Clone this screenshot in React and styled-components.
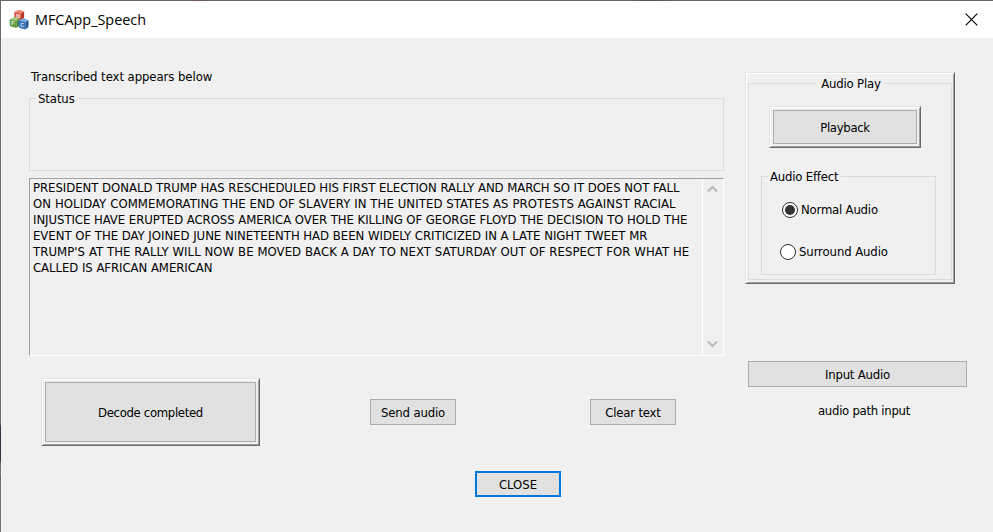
import React from 'react';
import styled, { createGlobalStyle } from 'styled-components';

const GlobalStyle = createGlobalStyle`
  * { box-sizing: border-box; }
  body { margin: 0; background: #f0f0f0; overflow: hidden; }
`;

const Window = styled.div`
  width: 993px;
  height: 532px;
  padding: 1px 0 0 1px;
  background:
    linear-gradient(to right, #686868 0 190px, #71585a 196px 202px, #686868 208px 625px, #55565a 650px, #686868 680px) top / 100% 1px no-repeat,
    linear-gradient(to bottom, #6c6c6c 0 424px, #323642 426px 460px, #747474 464px 477px, #444 478px, #747474 480px) left / 1px 100% no-repeat,
    #f0f0f0;
  font: 13px/16px 'DejaVu Sans Condensed', 'DejaVu Sans', sans-serif;
  color: #000;
`;

const TitleBar = styled.header`
  height: 37px;
  display: flex;
  align-items: center;
  padding: 0 15px 0 8px;
  background: #fff;
`;

const Title = styled.h1`
  flex: 1;
  margin: 0 0 0 6px;
  font: 400 14.4px/20px 'Open Sans', 'Noto Sans', sans-serif;
`;

const CloseIcon = styled.svg`
  display: block;
  width: 13px;
  height: 13px;
`;

const Text = styled.span`
  white-space: nowrap;
  letter-spacing: ${p => p.$track || 0}px;
`;

const Body = styled.main`
  display: flex;
  gap: 21px;
  padding-left: 28px;
`;

const MainColumn = styled.section`
  width: 695px;
  padding-top: 31px;
`;

const Caption = styled.div`
  height: 16px;
  padding-left: 2px;
`;

const Group = styled.fieldset`
  min-width: 0;
  height: ${p => p.$height}px;
  margin: ${p => p.$margin || '0'};
  padding: 0;
  border: 1px solid #dcdcdc;
`;

const Legend = styled.legend`
  height: 15px;
  line-height: 15px;
  margin-left: ${p => (p.$center ? 'auto' : '6px')};
  margin-right: auto;
  padding: 0 3px 0 ${p => (p.$center ? 5 : 2)}px;
`;

const Edit = styled.div`
  display: flex;
  height: 178px;
  margin-top: 7px;
  border: 1px solid #fff;
  border-top-color: #a0a0a0;
  border-left-color: #a0a0a0;
`;

const Transcript = styled.div`
  flex: 1;
  padding: 1px 0 0 3px;
`;

const Line = styled.div`
  height: 16px;
  white-space: nowrap;
  letter-spacing: ${p => p.$track}px;
`;

const ScrollBar = styled.div`
  width: 21px;
  display: flex;
  flex-direction: column;
  justify-content: space-between;
  align-items: center;
  padding: 6px 2px 7px 0;
  border-left: 1px solid #fff;
`;

const Chevron = styled.svg`
  display: block;
  width: 11px;
  height: 8px;
  fill: none;
  stroke: #bcbcbc;
  stroke-width: 2.2;
`;

const Actions = styled.div`
  display: flex;
  align-items: flex-start;
  margin: 22px 0 25px 12px;
`;

const RaisedFrame = styled.div`
  width: ${p => p.$width}px;
  height: ${p => p.$height}px;
  margin: ${p => p.$margin || '0'};
  padding: ${p => p.$pad}px;
  border: 1px solid;
  border-color: #e3e3e3 #696969 #696969 #e3e3e3;
  box-shadow: inset 1px 1px #fff, inset -1px -1px #a0a0a0;
`;

const Button = styled.button`
  display: flex;
  align-items: center;
  justify-content: center;
  width: ${p => (p.$width ? `${p.$width}px` : '100%')};
  height: ${p => (p.$height ? `${p.$height}px` : '100%')};
  margin: ${p => p.$margin || '0'};
  padding: 2px 0 0;
  border: ${p => (p.$default ? '2px solid #0078d7' : '1px solid #adadad')};
  border-radius: 0;
  background: #e1e1e1;
  font: inherit;
  color: #000;
`;

const SideColumn = styled.aside`
  width: 222px;
  padding-top: 34px;
`;

const Radio = styled.label`
  display: flex;
  align-items: center;
  gap: 3px;
  height: 16px;
  line-height: 18px;
  margin: ${p => p.$margin};
`;

const RadioDot = styled.span`
  display: flex;
  align-items: center;
  justify-content: center;
  width: 16px;
  height: 16px;
  border: 1px solid #333;
  border-radius: 50%;
  background: #fff;

  &::after {
    content: '';
    width: 10px;
    height: 10px;
    border-radius: 50%;
    background: ${p => (p.$checked ? '#333' : 'transparent')};
  }
`;

const PathLabel = styled.div`
  display: flex;
  justify-content: center;
  width: 219px;
  margin: 16px 0 0 3px;
  padding: 0 6px 0 19px;
`;

const lines = [
  ['PRESIDENT DONALD TRUMP HAS RESCHEDULED HIS FIRST ELECTION RALLY AND MARCH SO IT DOES NOT FALL', -0.035],
  ['ON HOLIDAY COMMEMORATING THE END OF SLAVERY IN THE UNITED STATES AS PROTESTS AGAINST RACIAL', 0.08],
  ['INJUSTICE HAVE ERUPTED ACROSS AMERICA OVER THE KILLING OF GEORGE FLOYD THE DECISION TO HOLD THE', -0.05],
  ['EVENT OF THE DAY JOINED JUNE NINETEENTH HAD BEEN WIDELY CRITICIZED IN A LATE NIGHT TWEET MR', -0.02],
  ["TRUMP'S AT THE RALLY WILL NOW BE MOVED BACK A DAY TO NEXT SATURDAY OUT OF RESPECT FOR WHAT HE", 0.07],
  ['CALLED IS AFRICAN AMERICAN', -0.05],
];

const Cube = ({ x, y, top, left, right, letter }) => (
  <g transform={`translate(${x} ${y})`}>
    <path d="M0 2.2 4 .2Q5 0 6 .2L10 1.8 6.8 4z" fill={top} />
    <path d="M0 2.2 6.8 3.8V11L1 9.6Q.3 9.3.2 8.6z" fill={left} />
    <path d="M6.8 3.8 10 1.8 9.8 8Q9.7 8.8 9 9.3L6.8 11z" fill={right} />
    <text x="1.7" y="8.4" fontSize="5.2" fontWeight="700" fontFamily="Liberation Sans, sans-serif" fill="#fff" fillOpacity=".85">{letter}</text>
  </g>
);

const AppIcon = () => (
  <svg width="20" height="20" viewBox="0 0 20 20">
    <Cube x={5.2} y={-0.2} top="#ee8672" left="#d6513f" right="#b83a2b" letter="M" />
    <Cube x={0.6} y={7} top="#a3cb80" left="#669e44" right="#47812f" letter="F" />
    <Cube x={9.6} y={8.4} top="#79afe0" left="#3474b5" right="#1f5596" letter="C" />
  </svg>
);

export default function App() {
  return (
    <>
      <GlobalStyle />
      <Window>
        <TitleBar>
          <AppIcon />
          <Title>MFCApp_Speech</Title>
          <CloseIcon viewBox="0 0 13 13">
            <path d="M.7.7 12.3 12.3M12.3.7.7 12.3" stroke="#000" strokeWidth="1.15" />
          </CloseIcon>
        </TitleBar>
        <Body>
          <MainColumn>
            <Caption><Text $track={-0.07}>Transcribed text appears below</Text></Caption>
            <Group $height={80} $margin="6px 0 0">
              <Legend><Text $track={-0.1}>Status</Text></Legend>
            </Group>
            <Edit>
              <Transcript>
                {lines.map(([text, track]) => <Line key={text} $track={track}>{text}</Line>)}
              </Transcript>
              <ScrollBar>
                <Chevron viewBox="0 0 11 8"><path d="M1 6.5 5.5 2 10 6.5" /></Chevron>
                <Chevron viewBox="0 0 11 8"><path d="M1 1.5 5.5 6 10 1.5" /></Chevron>
              </ScrollBar>
            </Edit>
            <Actions>
              <RaisedFrame $width={219} $height={68} $pad={3}>
                <Button><Text $track={-0.33}>Decode completed</Text></Button>
              </RaisedFrame>
              <Button $width={86} $height={26} $margin="21px 0 0 110px"><Text $track={-0.16}>Send audio</Text></Button>
              <Button $width={86} $height={26} $margin="21px 0 0 134px"><Text $track={-0.2}>Clear text</Text></Button>
            </Actions>
            <Button $default $width={86} $height={26} $margin="0 0 0 446px"><Text>CLOSE</Text></Button>
          </MainColumn>
          <SideColumn>
            <RaisedFrame $width={210} $height={212} $pad={2}>
              <Group $height={204} $margin="1px 0 0">
                <Legend $center><Text $track={-0.2}>Audio Play</Text></Legend>
                <RaisedFrame $width={152} $height={42} $pad={3} $margin="15px 0 0 20px">
                  <Button><Text $track={-0.32}>Playback</Text></Button>
                </RaisedFrame>
                <Group $height={106} $margin="21px 15px 0 12px">
                  <Legend><Text $track={-0.2}>Audio Effect</Text></Legend>
                  <Radio $margin="18px 0 0 20px"><RadioDot $checked /><Text $track={-0.2}>Normal Audio</Text></Radio>
                  <Radio $margin="26px 0 0 18px"><RadioDot /><Text $track={-0.1}>Surround Audio</Text></Radio>
                </Group>
              </Group>
            </RaisedFrame>
            <Button $width={219} $height={26} $margin="77px 0 0 3px"><Text $track={-0.2}>Input Audio</Text></Button>
            <PathLabel><Text $track={-0.28}>audio path input</Text></PathLabel>
          </SideColumn>
        </Body>
      </Window>
    </>
  );
}
